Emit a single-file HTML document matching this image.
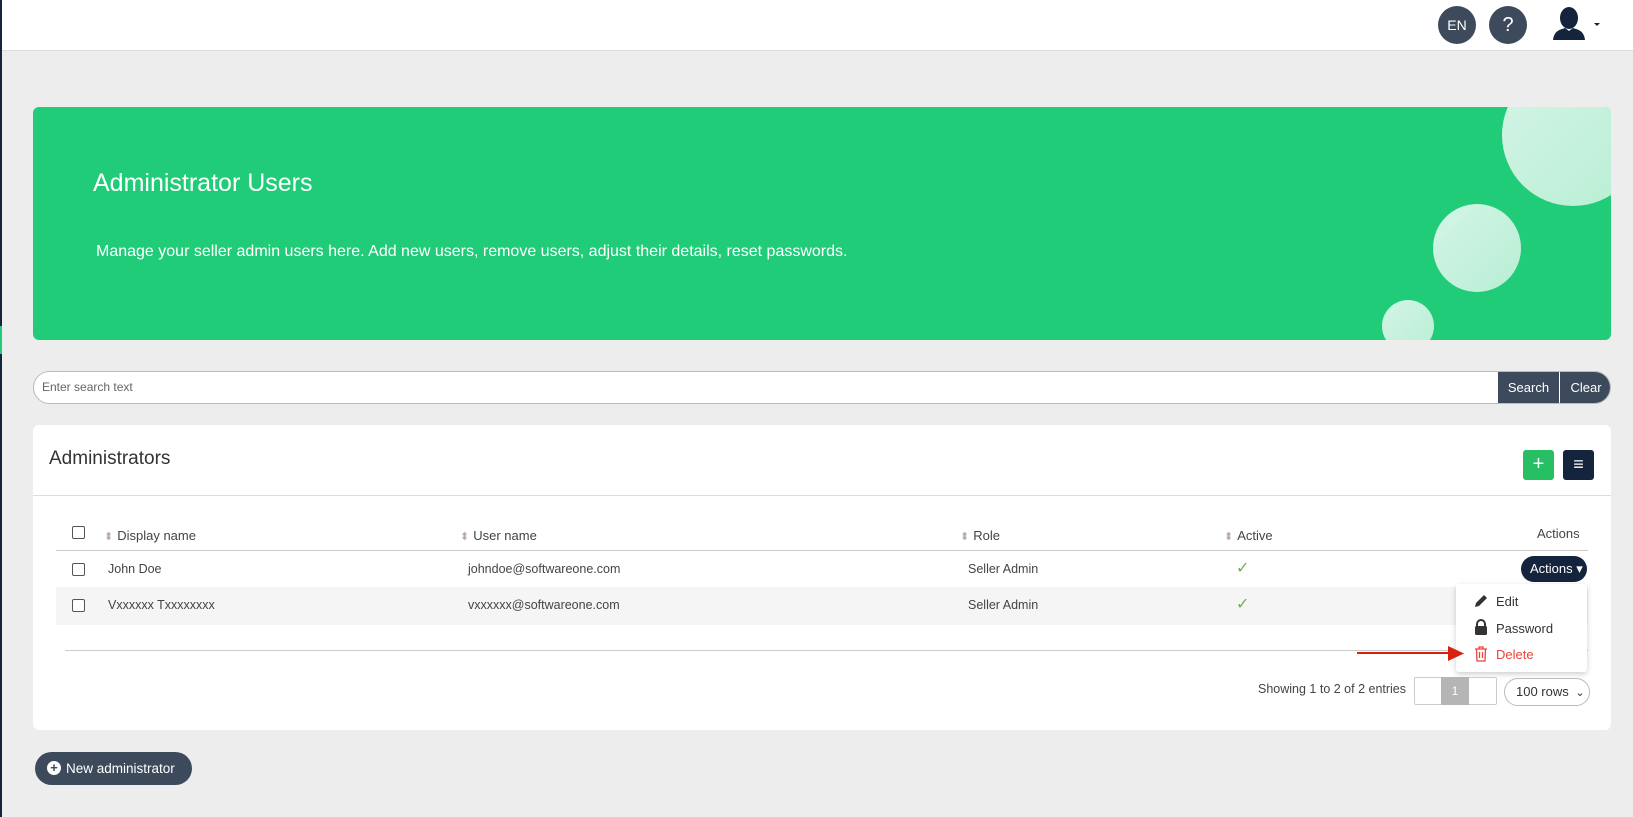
<!DOCTYPE html>
<html><head><meta charset="utf-8"><style>
*{box-sizing:border-box;margin:0;padding:0}
body{width:1633px;height:817px;background:#ededed;font-family:"Liberation Sans",sans-serif;position:relative;overflow:hidden;color:#333}
.abs{position:absolute}
.top{left:0;top:0;width:1633px;height:51px;background:#fff;border-bottom:1px solid #ddd}
.circ{width:38px;height:38px;border-radius:50%;background:#3d4a5c;color:#fff;font-size:14px;display:flex;align-items:center;justify-content:center}
.banner{left:33px;top:107px;width:1578px;height:233px;background:#20cc78;border-radius:6px;overflow:hidden}
.bub{position:absolute;border-radius:50%;background:linear-gradient(135deg,#d4f5e6,#b8eed4)}
.search{left:33px;top:371px;width:1578px;height:33px;background:#fff;border:1px solid #bbb;border-radius:17px 17px 17px 17px;overflow:hidden}
.card{left:33px;top:425px;width:1578px;height:305px;background:#fff;border-radius:6px}
.th{font-size:13px;color:#444;top:528px}
.td{font-size:12.5px;color:#444}
.cb{width:13px;height:13px;border:1px solid #555;border-radius:2px;background:#fff}
.sort{font-size:11px;color:#b9a9b9;margin-right:4px}
</style></head><body>
<div class="abs" style="left:0;top:0;width:2px;height:817px;background:#14243c;z-index:5"></div>
<div class="abs" style="left:0;top:326px;width:2px;height:28px;background:#20cc78;z-index:6"></div>
<div class="abs top"></div>
<div class="abs circ" style="left:1438px;top:6px">EN</div>
<div class="abs circ" style="left:1489px;top:6px;font-size:20px">?</div>
<svg class="abs" style="left:1552px;top:4px" width="50" height="40" viewBox="0 0 50 40"><ellipse cx="17" cy="14" rx="9" ry="11" fill="#14243c"/><path d="M1 36 Q2 27 10 25 L13 24 L17 27 L21 24 L24 25 Q32 27 33 36 Z" fill="#14243c"/><path d="M42 19 L48 19 L45 22Z" fill="#14243c"/></svg>

<div class="abs banner">
<div class="bub" style="left:1469px;top:-43px;width:142px;height:142px"></div>
<div class="bub" style="left:1400px;top:97px;width:88px;height:88px"></div>
<div class="bub" style="left:1349px;top:193px;width:52px;height:52px"></div>
<div class="abs" style="left:60px;top:62px;color:#fff;font-size:25px">Administrator Users</div>
<div class="abs" style="left:63px;top:136px;color:#fff;font-size:16px">Manage your seller admin users here. Add new users, remove users, adjust their details, reset passwords.</div>
</div>

<div class="abs search"><span class="abs" style="left:8px;top:8px;font-size:12px;color:#666">Enter search text</span>
<div class="abs" style="left:1464px;top:0;width:61px;height:33px;background:#3d4a5c;color:#fff;font-size:13px;text-align:center;line-height:31px">Search</div>
<div class="abs" style="left:1526px;top:0;width:52px;height:33px;background:#3d4a5c;color:#fff;font-size:13px;text-align:center;line-height:31px">Clear</div></div>

<div class="abs card"></div>
<div class="abs" style="left:49px;top:448px;font-size:19px;color:#333">Administrators</div>
<div class="abs" style="left:33px;top:495px;width:1578px;height:1px;background:#ddd"></div>
<div class="abs" style="left:1523px;top:450px;width:31px;height:30px;background:#26bf63;border-radius:3px;color:#fff;font-size:20px;text-align:center;line-height:29px">+</div>
<div class="abs" style="left:1563px;top:450px;width:31px;height:30px;background:#14243c;border-radius:3px;color:#fff;font-size:18px;text-align:center;line-height:29px">≡</div>

<div class="abs cb" style="left:72px;top:526px"></div>
<div class="abs th" style="left:104px"><span class="sort">⬍</span>Display name</div>
<div class="abs th" style="left:460px"><span class="sort">⬍</span>User name</div>
<div class="abs th" style="left:960px"><span class="sort">⬍</span>Role</div>
<div class="abs th" style="left:1224px"><span class="sort">⬍</span>Active</div>
<div class="abs th" style="left:1537px;top:526px">Actions</div>
<div class="abs" style="left:56px;top:550px;width:1532px;height:1px;background:#ccc"></div>
<div class="abs" style="left:56px;top:587px;width:1532px;height:38px;background:#f5f5f5"></div>

<div class="abs cb" style="left:72px;top:563px"></div>
<div class="abs td" style="left:108px;top:562px">John Doe</div>
<div class="abs td" style="left:468px;top:562px">johndoe@softwareone.com</div>
<div class="abs td" style="left:968px;top:562px">Seller Admin</div>
<div class="abs" style="left:1236px;top:558px;color:#6bb34a;font-size:16px">✓</div>
<div class="abs" style="left:1521px;top:556px;width:66px;height:26px;background:#14243c;border-radius:13px;color:#fff;font-size:13px;line-height:26px;padding-left:9px">Actions ▾</div>

<div class="abs cb" style="left:72px;top:599px"></div>
<div class="abs td" style="left:108px;top:598px">Vxxxxxx Txxxxxxxx</div>
<div class="abs td" style="left:468px;top:598px">vxxxxxx@softwareone.com</div>
<div class="abs td" style="left:968px;top:598px">Seller Admin</div>
<div class="abs" style="left:1236px;top:594px;color:#6bb34a;font-size:16px">✓</div>

<div class="abs" style="left:65px;top:650px;width:1523px;height:1px;background:#ccc"></div>
<div class="abs" style="left:1456px;top:584px;width:131px;height:88px;background:#fff;box-shadow:0 2px 6px rgba(0,0,0,.2);border-radius:3px"></div>
<svg class="abs" style="left:1473px;top:593px" width="16" height="16" viewBox="0 0 16 16"><path d="M2 14 L3 10 L11 2 L14 5 L6 13Z" fill="#333"/></svg>
<div class="abs" style="left:1496px;top:594px;font-size:13px">Edit</div>
<svg class="abs" style="left:1474px;top:619px" width="14" height="16" viewBox="0 0 14 16"><path d="M3 7 V5 A4 4 0 0 1 11 5 V7" stroke="#333" stroke-width="2" fill="none"/><rect x="1" y="7" width="12" height="9" rx="1.5" fill="#333"/></svg>
<div class="abs" style="left:1496px;top:621px;font-size:13px">Password</div>
<svg class="abs" style="left:1474px;top:646px" width="14" height="16" viewBox="0 0 14 16"><path d="M1 3 H13 M5 3 V1 H9 V3 M2.5 3 L3 15 H11 L11.5 3 M5.5 6 V12 M8.5 6 V12" stroke="#e8443a" stroke-width="1.3" fill="none"/></svg>
<div class="abs" style="left:1496px;top:647px;font-size:13px;color:#e8443a">Delete</div>
<div class="abs" style="left:1357px;top:652px;width:92px;height:2px;background:#d9200f"></div>
<svg class="abs" style="left:1448px;top:646px" width="16" height="15"><path d="M0 0 L16 7.5 L0 15Z" fill="#d9200f"/></svg>

<div class="abs" style="left:1258px;top:682px;font-size:12.5px;color:#444">Showing 1 to 2 of 2 entries</div>
<div class="abs" style="left:1414px;top:677px;width:83px;height:28px;border:1px solid #ccc;border-radius:2px"></div>
<div class="abs" style="left:1441px;top:677px;width:28px;height:28px;background:#b5b5b5;color:#fff;font-size:12px;text-align:center;line-height:28px">1</div>
<div class="abs" style="left:1504px;top:678px;width:86px;height:28px;border:1px solid #bbb;border-radius:14px;font-size:13px;line-height:26px;padding-left:11px">100 rows <span style="font-size:11px;margin-left:3px">⌄</span></div>

<div class="abs" style="left:35px;top:752px;width:157px;height:33px;background:#3d4a5c;border-radius:17px;color:#fff;font-size:13.5px;line-height:33px;padding-left:31px">New administrator</div>
<div class="abs" style="left:47px;top:761px;width:14px;height:14px;border-radius:50%;background:#fff;color:#3d4a5c;font-size:13px;font-weight:bold;text-align:center;line-height:14px">+</div>
</body></html>
